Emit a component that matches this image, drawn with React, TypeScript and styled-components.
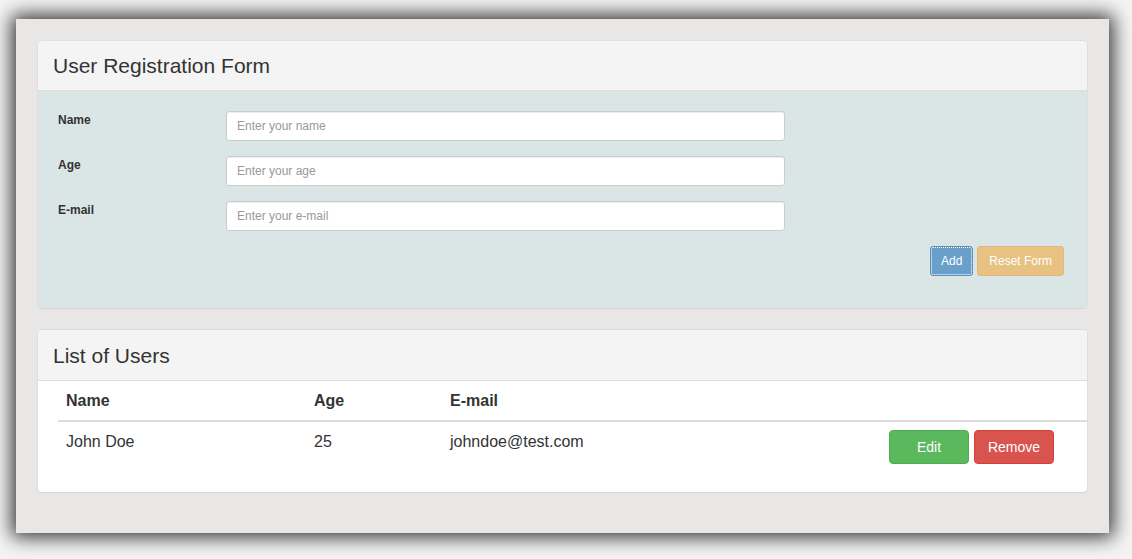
import React from "react";
import styled, { createGlobalStyle } from "styled-components";

const Global = createGlobalStyle`
  html, body { margin: 0; padding: 0; background: #f4f4f4; }
  body { font-family: "Liberation Sans", Arial, sans-serif; color: #333; }
  * { box-sizing: border-box; }
`;

const Page = styled.div`
  width: 1132px;
  height: 559px;
  padding: 19px 23px 26px 16px;
  overflow: hidden;
`;

const Shell = styled.div`
  height: 514px;
  background: #e8e7e5;
  box-shadow: 0 0 18px 4px rgba(0, 0, 0, 0.8);
  padding: 22px 22px 0 22px;
  display: flex;
  flex-direction: column;
  gap: 22px;
`;

const Panel = styled.section`
  background: #fff;
  border-radius: 4px;
  box-shadow: 0 1px 1px rgba(0, 0, 0, 0.06), 0 0 0 1px rgba(0, 0, 0, 0.03);
  overflow: hidden;
`;

const PanelHeading = styled.div<{ $offset?: number }>`
  background: #f4f4f4;
  border-bottom: 1px solid #dddddd;
  padding: ${(p) => 13 + (p.$offset ?? 0)}px 15px 13px 15px;
`;

const PanelTitle = styled.h3`
  margin: 0;
  font-size: 21px;
  font-weight: 400;
  line-height: 23px;
  color: #333;
`;

const FormBody = styled.div`
  background: #dae6e6;
  padding: 20px 23px 32px 20px;
  display: flex;
  flex-direction: column;
`;

const FieldRow = styled.div`
  display: flex;
  align-items: flex-start;
  margin-bottom: 15px;
`;

const Label = styled.label`
  width: 168px;
  padding-top: 1px;
  font-size: 12px;
  font-weight: 700;
  line-height: 17px;
  color: #333;
`;

const Input = styled.input`
  width: 559px;
  height: 30px;
  border: 1px solid #cccccc;
  border-radius: 3px;
  background: #fff;
  padding: 0 10px;
  font-family: "Liberation Sans", Arial, sans-serif;
  font-size: 12px;
  color: #555;
  box-shadow: inset 0 1px 1px rgba(0, 0, 0, 0.075);
  outline: none;
  &::placeholder { color: #999; }
`;

const Actions = styled.div`
  display: flex;
  justify-content: flex-end;
  gap: 4px;
`;

const SmallButton = styled.button<{ $tone: "primary" | "warning" }>`
  height: 30px;
  padding: 0 ${(p) => (p.$tone === "primary" ? "10px" : "11px")};
  font-family: "Liberation Sans", Arial, sans-serif;
  font-size: 12px;
  color: #fff;
  border-radius: 3px;
  border: 1px solid ${(p) => (p.$tone === "primary" ? "#5d8fbd" : "#e2b878")};
  background: ${(p) => (p.$tone === "primary" ? "#6a9fca" : "#e8c283")};
  outline: ${(p) => (p.$tone === "primary" ? "1px dotted #ffffff" : "none")};
  outline-offset: -2px;
  cursor: pointer;
`;

const TableWrap = styled.div`
  padding: 0 0 20px 20px;
`;

const Table = styled.table`
  width: 100%;
  border-collapse: collapse;
  font-size: 16px;
  line-height: 23px;
  color: #333;
`;

const Th = styled.th<{ $w?: number }>`
  text-align: left;
  font-weight: 700;
  padding: 8px;
  border-bottom: 2px solid #dddddd;
  width: ${(p) => (p.$w ? `${p.$w}px` : "auto")};
`;

const Td = styled.td`
  padding: 8px;
  vertical-align: top;
`;

const ActionCell = styled.td`
  padding: 8px 33px 8px 8px;
  vertical-align: top;
  text-align: right;
  white-space: nowrap;
`;

const RowButton = styled.button<{ $tone: "success" | "danger" }>`
  width: 80px;
  height: 34px;
  margin-left: 5px;
  font-family: "Liberation Sans", Arial, sans-serif;
  font-size: 14px;
  color: #fff;
  border-radius: 4px;
  border: 1px solid ${(p) => (p.$tone === "success" ? "#4cae4c" : "#d43f3a")};
  background: ${(p) => (p.$tone === "success" ? "#5cb85c" : "#d9534f")};
  cursor: pointer;
`;

export default function App() {
  return (
    <>
      <Global />
      <Page>
        <Shell>
          <Panel>
            <PanelHeading>
              <PanelTitle>User Registration Form</PanelTitle>
            </PanelHeading>
            <FormBody>
              <FieldRow>
                <Label>Name</Label>
                <Input placeholder="Enter your name" />
              </FieldRow>
              <FieldRow>
                <Label>Age</Label>
                <Input placeholder="Enter your age" />
              </FieldRow>
              <FieldRow>
                <Label>E-mail</Label>
                <Input placeholder="Enter your e-mail" />
              </FieldRow>
              <Actions>
                <SmallButton $tone="primary">Add</SmallButton>
                <SmallButton $tone="warning">Reset Form</SmallButton>
              </Actions>
            </FormBody>
          </Panel>
          <Panel>
            <PanelHeading $offset={1}>
              <PanelTitle>List of Users</PanelTitle>
            </PanelHeading>
            <TableWrap>
              <Table>
                <thead>
                  <tr>
                    <Th $w={248}>Name</Th>
                    <Th $w={136}>Age</Th>
                    <Th>E-mail</Th>
                    <Th />
                  </tr>
                </thead>
                <tbody>
                  <tr>
                    <Td>John Doe</Td>
                    <Td>25</Td>
                    <Td>johndoe@test.com</Td>
                    <ActionCell>
                      <RowButton $tone="success">Edit</RowButton>
                      <RowButton $tone="danger">Remove</RowButton>
                    </ActionCell>
                  </tr>
                </tbody>
              </Table>
            </TableWrap>
          </Panel>
        </Shell>
      </Page>
    </>
  );
}
